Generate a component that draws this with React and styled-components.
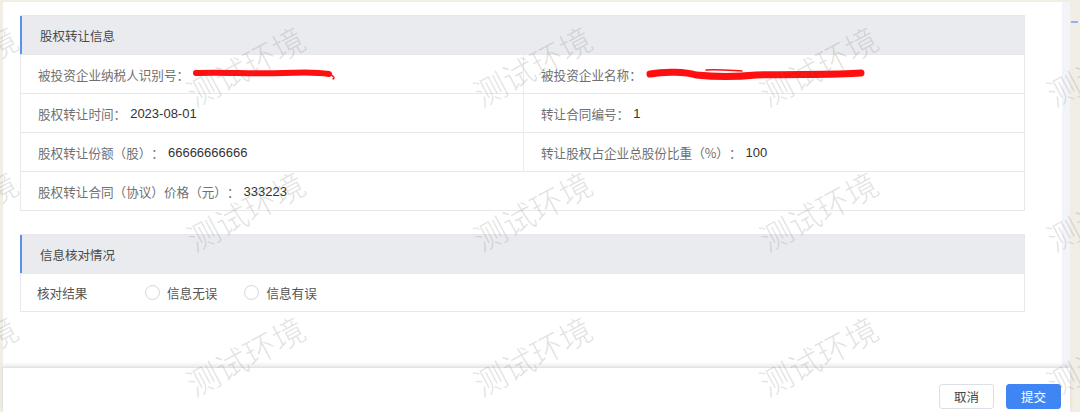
import React from 'react'
import styled, { createGlobalStyle } from 'styled-components'

const font = `"Liberation Sans", "Noto Sans CJK SC", sans-serif`
const cjk = `"Noto Sans CJK SC", "Liberation Sans", sans-serif`

const Global = createGlobalStyle`
  html, body {
    margin: 0;
    padding: 0;
    background: #f1eee6;
    font-family: ${font};
    text-spacing-trim: space-all;
  }
`

const Page = styled.div`
  width: 1080px;
  height: 412px;
  box-sizing: border-box;
  padding: 2px 0 0 3px;
  display: flex;
  flex-direction: column;
  overflow: hidden;
  position: relative;
`

const Scroller = styled.div`
  width: 1067px;
  height: 365px;
  display: flex;
`

const Content = styled.div`
  flex: 1;
  background: #fff;
  box-sizing: border-box;
  padding: 13px 37px 0 17px;
  display: flex;
  flex-direction: column;
  gap: 23px;
`

const Track = styled.div`
  width: 8px;
  background: #f2f4fa;
`

const Card = styled.section`
  border: 1px solid #e6e8eb;
  border-left: 0;
`

const CardHeader = styled.div`
  height: 38px;
  display: flex;
  align-items: center;
  background: #e9ebef;
  border-left: 2px solid #5b8ff0;
  padding-left: 18px;
  font-family: ${cjk};
  font-size: 12.5px;
  color: #4a4a4a;
`

const Grid = styled.div`
  display: grid;
  grid-template-columns: 502px 1fr;
  border-left: 1px solid #e6e8eb;
`

const Cell = styled.div`
  height: 38px;
  display: flex;
  align-items: center;
  padding-left: 17px;
  border-top: 1px solid #e8e8e8;
  border-left: ${p => (p.$right ? '1px solid #ececec' : '0')};
  grid-column: ${p => (p.$wide ? '1 / span 2' : 'auto')};
`

const Label = styled.span`
  font-family: ${cjk};
  font-size: 12.6px;
  color: #707070;
  white-space: nowrap;
`

const Value = styled.span`
  color: #333;
  font-size: 13px;
  margin-left: 4px;
  display: flex;
  align-items: center;
`

const CheckRow = styled.div`
  height: 37px;
  display: flex;
  align-items: center;
  padding-left: 16px;
  border-top: 1px solid #e8e8e8;
  border-left: 1px solid #e6e8eb;
  font-family: ${cjk};
  font-size: 12.6px;
  color: #555;
`

const CheckLabel = styled.span`
  width: 108px;
`

const Radio = styled.label`
  display: flex;
  align-items: center;
  gap: 7px;
  margin-right: 27px;
  color: #555;
`

const Circle = styled.span`
  width: 13px;
  height: 13px;
  border: 1px solid #d4d6da;
  border-radius: 50%;
  background: #fff;
`

const Footer = styled.div`
  width: 1067px;
  flex: 1;
  background: #fff;
  border-top: 1px solid #e0e2e6;
  box-shadow: 0 -2px 4px rgba(0, 0, 0, 0.1);
  display: flex;
  justify-content: flex-end;
  align-items: flex-start;
  gap: 12px;
  box-sizing: border-box;
  padding: 16px 9px 0 0;
  position: relative;
`

const Button = styled.button`
  width: 55px;
  height: 25px;
  border-radius: 3px;
  font-family: ${cjk};
  font-size: 12.5px;
  border: 1px solid ${p => (p.$primary ? '#3f86f4' : '#dcdfe4')};
  background: ${p => (p.$primary ? '#3f86f4' : '#fff')};
  color: ${p => (p.$primary ? '#fff' : '#444')};
  padding: 0;
`

const Marks = styled.div`
  position: absolute;
  inset: 0;
  pointer-events: none;
  overflow: hidden;
`

const Mark = styled.span`
  position: absolute;
  font-family: "Noto Sans CJK SC", sans-serif;
  font-size: 32px;
  font-weight: 300;
  color: rgba(110, 110, 110, 0.2);
  white-space: nowrap;
  transform: translate(-50%, -50%) rotate(-28deg);
`

const Tick = styled.div`
  position: absolute;
  left: 1071px;
  top: 21px;
  width: 7px;
  height: 2px;
  background: #8fb3f3;
`

const Scribble = ({ w, h, children }) => (
  <svg width={w} height={h} viewBox={`0 0 ${w} ${h}`}>
    <g fill='none' stroke='#ff1010' strokeLinecap='round' strokeLinejoin='round'>
      {children}
    </g>
  </svg>
)

const markX = [-42, 245, 532, 818, 1105]
const markY = [65, 210, 355]

export default function App () {
  return (
    <>
      <Global />
      <Page>
        <Scroller>
          <Content>
            <Card>
              <CardHeader>股权转让信息</CardHeader>
              <Grid>
                <Cell>
                  <Label>被投资企业纳税人识别号：</Label>
                  <Value>
                    <Scribble w={146} h={14}>
                      <path d='M3 6 C30 5 60 7 90 6 C110 5 125 5 136 7' strokeWidth='6' />
                      <path d='M136 7 C141 9 142 11 140 12' strokeWidth='1.5' />
                    </Scribble>
                  </Value>
                </Cell>
                <Cell $right>
                  <Label>被投资企业名称：</Label>
                  <Value>
                    <Scribble w={222} h={18}>
                      <path d='M4 9 C20 6 40 7 50 10 C70 12 90 12 110 10 C150 9 190 10 215 8' strokeWidth='7' />
                      <path d='M60 5 C70 4 80 5 96 6' strokeWidth='1.5' />
                    </Scribble>
                  </Value>
                </Cell>
                <Cell>
                  <Label>股权转让时间：</Label>
                  <Value>2023-08-01</Value>
                </Cell>
                <Cell $right>
                  <Label>转让合同编号：</Label>
                  <Value>1</Value>
                </Cell>
                <Cell>
                  <Label>股权转让份额（股）：</Label>
                  <Value>66666666666</Value>
                </Cell>
                <Cell $right>
                  <Label>转让股权占企业总股份比重（%）：</Label>
                  <Value>100</Value>
                </Cell>
                <Cell $wide>
                  <Label>股权转让合同（协议）价格（元）：</Label>
                  <Value>333223</Value>
                </Cell>
              </Grid>
            </Card>
            <Card>
              <CardHeader>信息核对情况</CardHeader>
              <CheckRow>
                <CheckLabel>核对结果</CheckLabel>
                <Radio><Circle />信息无误</Radio>
                <Radio><Circle />信息有误</Radio>
              </CheckRow>
            </Card>
          </Content>
          <Track />
        </Scroller>
        <Footer>
          <Button>取消</Button>
          <Button $primary>提交</Button>
        </Footer>
        <Tick />
        <Marks>
          {markY.map(y =>
            markX.map(x => (
              <Mark key={`${x}-${y}`} style={{ left: x, top: y }}>测试环境</Mark>
            ))
          )}
        </Marks>
      </Page>
    </>
  )
}
